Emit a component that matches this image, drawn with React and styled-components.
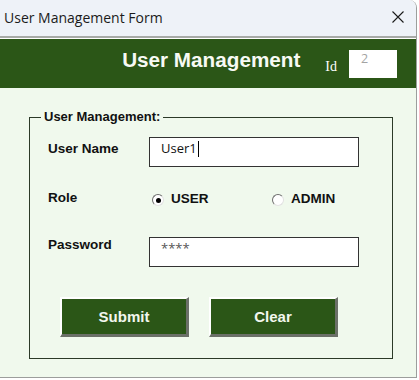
import React from 'react';
import styled, { createGlobalStyle } from 'styled-components';

const GlobalStyle = createGlobalStyle`
  body {
    margin: 0;
    background: #ffffff;
  }
  * {
    box-sizing: border-box;
  }
`;

const Window = styled.div`
  width: 417px;
  height: 378px;
  display: flex;
  flex-direction: column;
  background: #ffffff;
  border-right: 1px solid #9c9e9c;
  border-bottom: 1px solid #9c9e9c;
  border-top-right-radius: 8px;
  overflow: hidden;
`;

const TitleBar = styled.div`
  height: 38px;
  flex-shrink: 0;
  display: flex;
  align-items: center;
  justify-content: space-between;
  padding: 0 12px 0 4px;
  background: #eef2f8;
  border-bottom: 2px solid #a7aaa7;
`;

const TitleText = styled.span`
  font-family: 'Open Sans', 'Noto Sans', sans-serif;
  font-size: 14px;
  color: #1b1b1b;
  line-height: 36px;
`;

const CloseButton = styled.button`
  width: 12px;
  height: 12px;
  padding: 0;
  border: 0;
  background: none;
  display: flex;
  margin-top: -2px;
`;

const Header = styled.div`
  height: 49px;
  flex-shrink: 0;
  margin-top: 1px;
  display: flex;
  align-items: flex-start;
  justify-content: flex-end;
  padding: 9px 19px 0 0;
  background: #2b5617;
`;

const HeaderTitle = styled.h1`
  margin: 0 25px 0 0;
  font-family: 'Liberation Sans', Arial, sans-serif;
  font-weight: bold;
  font-size: 20.7px;
  line-height: 24px;
  color: #f7faf4;
`;

const IdLabel = styled.span`
  margin: 11px 12px 0 0;
  font-family: 'Liberation Serif', 'Times New Roman', serif;
  font-size: 14px;
  line-height: 16px;
  color: #ffffff;
`;

const IdBox = styled.div`
  width: 48px;
  height: 28px;
  margin-top: 2px;
  padding: 1px 0 0 12px;
  background: #ffffff;
  font-family: 'Open Sans', 'Noto Sans', sans-serif;
  font-size: 12.5px;
  line-height: 16px;
  color: #a3a3a3;
`;

const Body = styled.div`
  flex: 1;
  padding: 21px 0 0 29px;
  background: #f0f9ed;
`;

const GroupBox = styled.fieldset`
  width: 359px;
  margin: 0;
  padding: 12px 0 21px 0;
  border: 1px solid #2c3a28;
`;

const Legend = styled.legend`
  margin-left: 11px;
  padding: 0 3px;
  font-family: 'Liberation Sans', Arial, sans-serif;
  font-weight: bold;
  font-size: 13px;
  line-height: 16px;
  color: #111111;
`;

const FormBody = styled.div`
  display: flex;
  flex-direction: column;
  padding-left: 18px;
`;

const Row = styled.div`
  display: flex;
  align-items: flex-start;
  margin-top: ${({ $gap }) => $gap || 0}px;
`;

const FieldLabel = styled.label`
  width: 101px;
  flex-shrink: 0;
  margin-top: ${({ $offset }) => $offset || 0}px;
  font-family: 'Liberation Sans', Arial, sans-serif;
  font-weight: bold;
  font-size: 13.5px;
  line-height: 16px;
  color: #111111;
`;

const TextBox = styled.div`
  width: 210px;
  height: 30px;
  display: flex;
  align-items: flex-start;
  padding: 2px 11px 0;
  background: #ffffff;
  border: 1px solid #333333;
  font-family: 'Open Sans', 'Noto Sans', sans-serif;
  font-size: 13px;
  line-height: 16px;
  color: ${({ $masked }) => ($masked ? '#555555' : '#111111')};
`;

const Caret = styled.span`
  width: 1px;
  height: 16px;
  margin: 1px 0 0 1px;
  background: #000000;
`;

const RadioGroup = styled.div`
  display: flex;
  margin: 1px 0 0 3px;
`;

const RadioOption = styled.label`
  width: 120px;
  display: flex;
  align-items: center;
  gap: 7px;
  font-family: 'Liberation Sans', Arial, sans-serif;
  font-weight: bold;
  font-size: 13.5px;
  line-height: 16px;
  color: #111111;
`;

const RadioCircle = styled.span`
  width: 12px;
  height: 12px;
  margin-top: 2px;
  border-radius: 50%;
  display: flex;
  align-items: center;
  justify-content: center;
  background: #ffffff;
  border: 1.5px solid;
  border-color: #6e6e6e #e2e2e2 #e2e2e2 #6e6e6e;

  &::after {
    content: '';
    width: 5px;
    height: 5px;
    border-radius: 50%;
    background: ${({ $checked }) => ($checked ? '#000000' : 'transparent')};
  }
`;

const ButtonRow = styled.div`
  display: flex;
  gap: 20px;
  margin: 30px 0 0 12px;
`;

const ActionButton = styled.button`
  width: 129px;
  height: 40px;
  padding: 0;
  background: #2b5617;
  border-style: solid;
  border-width: 2px 3px 3px 2px;
  border-color: #ffffff #6b7068 #6b7068 #ffffff;
  font-family: 'Liberation Sans', Arial, sans-serif;
  font-weight: bold;
  font-size: 15px;
  color: #f2f7ee;
`;

const App = () => {
    return (
        <>
            <GlobalStyle />
            <Window>
                <TitleBar>
                    <TitleText>User Management Form</TitleText>
                    <CloseButton aria-label="Close">
                        <svg width="12" height="12" viewBox="0 0 12 12">
                            <path d="M0.5 0.5 L11.5 11.5 M11.5 0.5 L0.5 11.5" stroke="#1b1b1b" strokeWidth="1.1" fill="none" />
                        </svg>
                    </CloseButton>
                </TitleBar>
                <Header>
                    <HeaderTitle>User Management</HeaderTitle>
                    <IdLabel>Id</IdLabel>
                    <IdBox>2</IdBox>
                </Header>
                <Body>
                    <GroupBox>
                        <Legend>User Management:</Legend>
                        <FormBody>
                            <Row>
                                <FieldLabel $offset={4}>User Name</FieldLabel>
                                <TextBox>
                                    User1
                                    <Caret />
                                </TextBox>
                            </Row>
                            <Row $gap={23}>
                                <FieldLabel>Role</FieldLabel>
                                <RadioGroup>
                                    <RadioOption>
                                        <RadioCircle $checked />
                                        USER
                                    </RadioOption>
                                    <RadioOption>
                                        <RadioCircle />
                                        ADMIN
                                    </RadioOption>
                                </RadioGroup>
                            </Row>
                            <Row $gap={30}>
                                <FieldLabel>Password</FieldLabel>
                                <TextBox $masked>****</TextBox>
                            </Row>
                            <ButtonRow>
                                <ActionButton>Submit</ActionButton>
                                <ActionButton>Clear</ActionButton>
                            </ButtonRow>
                        </FormBody>
                    </GroupBox>
                </Body>
            </Window>
        </>
    );
};

export default App;
